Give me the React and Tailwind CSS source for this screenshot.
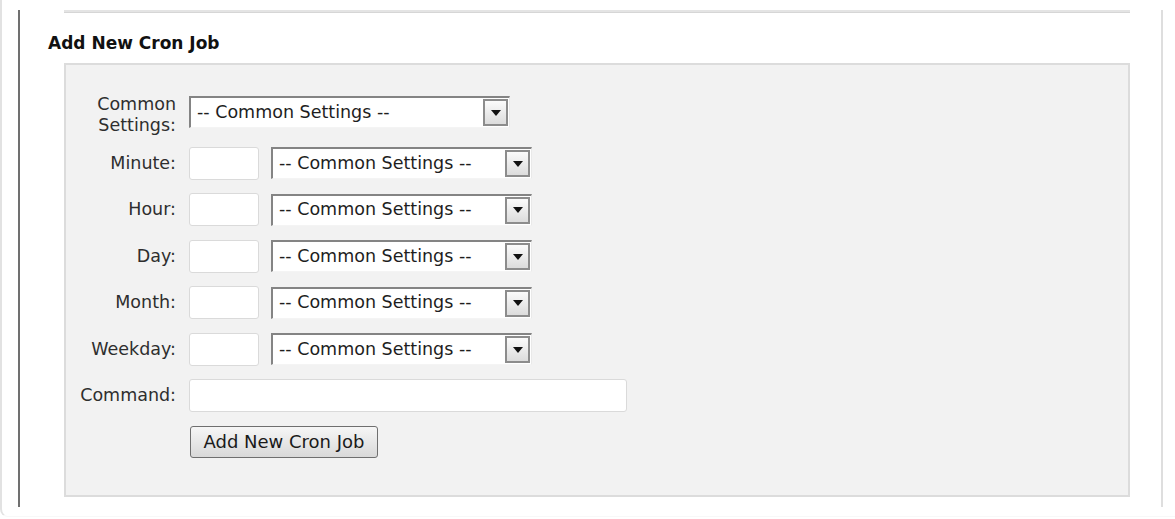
import React from 'react';

const FIELDS = ['Minute', 'Hour', 'Day', 'Month', 'Weekday'];

function FakeSelect({ width }) {
  return (
    <div
      className={`${width} h-[32px] flex items-center bg-white border-t-2 border-l-2 border-[#848484] border-r border-b border-r-[#e9e9e9] border-b-[#f4f4f4]`}
    >
      <span className="flex-1 pl-[6px] text-[17.5px] leading-none text-[#1e1e1e] whitespace-nowrap">
        -- Common Settings --
      </span>
      <div className="mr-[1px] w-[25px] h-[27px] flex items-center justify-center border-2 border-[#8c8c8c] bg-gradient-to-b from-[#fbfbfb] to-[#dcdcdc]">
        <svg width="10" height="6" viewBox="0 0 10 6">
          <path d="M0 0h10L5 6z" fill="#111" />
        </svg>
      </div>
    </div>
  );
}

function Row({ label, children, className = 'h-[33px] items-center' }) {
  return (
    <div className={`flex ${className}`}>
      <label className="w-[100px] text-right text-[17.5px] leading-[21px] text-[#2e2e2e]">{label}</label>
      <div className="ml-[13px] flex items-center gap-[12px]">{children}</div>
    </div>
  );
}

export default function App() {
  return (
    <div className="w-[1175px] h-[519px] bg-white overflow-hidden font-['DejaVu_Sans',sans-serif]">
      <div className="h-[517px] border-l-2 border-b border-l-[#e2e2e2] border-b-[#f8f8f8] rounded-bl-[8px] pt-[10px] pl-[16px]">
        <div className="w-[1145px] h-[497px] border-l-2 border-l-[#707070] border-r-2 border-r-[#dedede]">
          {/* previous section rule */}
          <div className="ml-[44px] w-[1066px] h-[3px] bg-[#e4e4e4] border-b border-[#d6d6d6]" />

          <h3 className="ml-[28px] mt-[20px] text-[17px] leading-[20px] font-bold text-[#111]">
            Add New Cron Job
          </h3>

          {/* form panel */}
          <div className="ml-[44px] mt-[10px] w-[1066px] h-[434px] border-2 border-[#dcdcdc] bg-[#f2f2f2] pt-[29px] pl-[10px]">
            <div className="flex flex-col gap-[13.5px]">
              <Row label="Common Settings:" className="h-[39px] items-start">
                <div className="mt-[2px]">
                  <FakeSelect width="w-[321px]" />
                </div>
              </Row>

              {FIELDS.map(f => (
                <Row key={f} label={`${f}:`}>
                  <div className="w-[70px] h-[33px] bg-white border border-[#dadada] rounded-[3px]" />
                  <FakeSelect width="w-[261px]" />
                </Row>
              ))}

              <Row label="Command:">
                <div className="w-[438px] h-[33px] bg-white border border-[#dadada] rounded-[3px]" />
              </Row>

              <div className="pl-[114px]">
                <button className="w-[188px] h-[32px] border border-[#6f6f6f] rounded-[3px] bg-gradient-to-b from-[#f6f6f6] to-[#d9d9d9] text-[18px] leading-none text-[#1a1a1a]">
                  Add New Cron Job
                </button>
              </div>
            </div>
          </div>
        </div>
      </div>
    </div>
  );
}
